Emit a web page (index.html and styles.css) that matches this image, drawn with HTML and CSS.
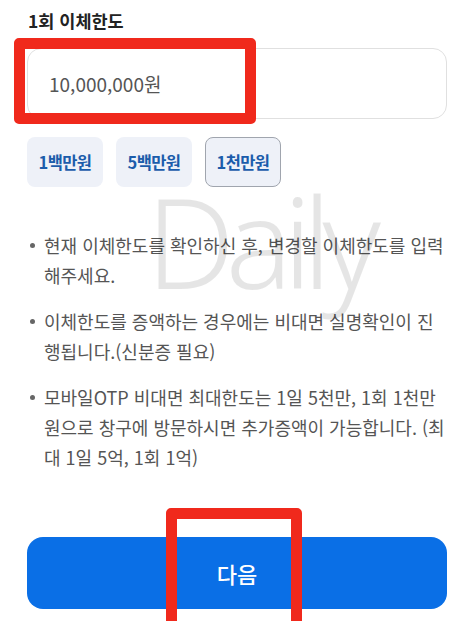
FILE: index.html
```html
<!DOCTYPE html>
<html lang="ko">
<head>
    <meta charset="UTF-8">
    <meta name="viewport" content="width=device-width, initial-scale=1.0">
    <title>1회 이체한도</title>
    <link rel="stylesheet" href="styles.css">
</head>
<body>
    <div class="page">
        <h2 class="title">1회 이체한도</h2>
        <div class="amount-box">
            <span class="amount">10,000,000원</span>
        </div>
        <div class="chips">
            <button class="chip">1백만원</button>
            <button class="chip">5백만원</button>
            <button class="chip selected">1천만원</button>
        </div>
        <ul class="notes">
            <li>현재 이체한도를 확인하신 후, 변경할 이체한도를 입력해주세요.</li>
            <li>이체한도를 증액하는 경우에는 비대면 실명확인이 진행됩니다.(신분증 필요)</li>
            <li>모바일OTP 비대면 최대한도는 1일 5천만, 1회 1천만원으로 창구에 방문하시면 추가증액이 가능합니다. (최대 1일 5억, 1회 1억)</li>
        </ul>
        <button class="next">다음</button>

        <!-- 워터마크 / 빨간 표시 -->
        <div class="watermark">Daily</div>
        <div class="mark mark-input"></div>
        <div class="mark mark-next"></div>
    </div>
</body>
</html>
```

FILE: styles.css
```css
body {
    margin: 0;
    background-color: #fff;
    font-family: "Noto Sans CJK KR", "Noto Sans", sans-serif;
    overflow: hidden;
}
.page {
    position: relative;
    width: 474px;
    height: 621px;
    padding: 9px 27px 0 27px;
    box-sizing: border-box;
}
.title {
    margin: 0 0 0 1px;
    font-size: 17.5px;
    font-weight: bold;
    line-height: 24px;
    color: #222;
}
.amount-box {
    margin-top: 15px;
    height: 71px;
    border: 1px solid #e0e0e0;
    border-radius: 14px;
    box-sizing: border-box;
    display: flex;
    align-items: center;
    padding-left: 21px;
}
.amount {
    font-size: 19px;
    color: #555;
}
.chips {
    display: flex;
    gap: 13px;
    margin-top: 18px;
}
.chip {
    width: 76px;
    height: 50px;
    border: 1px solid transparent;
    border-radius: 8px;
    background-color: #eef1f8;
    color: #1b5cab;
    font-family: inherit;
    font-size: 16.5px;
    font-weight: bold;
    letter-spacing: -0.6px;
    padding: 0;
}
.chip.selected {
    border-color: #a0a5ae;
}
.notes {
    list-style: none;
    margin: 43px 0 0 0;
    padding: 0 0 0 17px;
    color: #555;
    font-size: 18px;
    line-height: 30px;
}
.notes li {
    position: relative;
    margin-bottom: 16px;
}
.notes li:last-child {
    margin-bottom: 0;
}
.notes li::before {
    content: "";
    position: absolute;
    left: -14px;
    top: 13px;
    width: 5px;
    height: 5px;
    border-radius: 50%;
    background-color: #666;
}
.next {
    display: block;
    width: 100%;
    height: 72px;
    margin-top: 65px;
    border: none;
    border-radius: 16px;
    background-color: #0a6fe6;
    color: #fff;
    font-family: inherit;
    font-size: 22px;
    font-weight: 500;
}
.watermark {
    position: absolute;
    left: 146px;
    top: 155px;
    font-family: "Noto Sans", sans-serif;
    font-weight: 300;
    font-size: 125px;
    letter-spacing: -9.5px;
    color: rgba(0, 0, 0, 0.1);
    pointer-events: none;
}
.mark {
    position: absolute;
    border: 11px solid #f0291c;
    border-radius: 5px;
    box-sizing: border-box;
}
.mark-input {
    left: 14px;
    top: 38px;
    width: 242px;
    height: 86px;
}
.mark-next {
    left: 166px;
    top: 508px;
    width: 136px;
    height: 130px;
}
```
